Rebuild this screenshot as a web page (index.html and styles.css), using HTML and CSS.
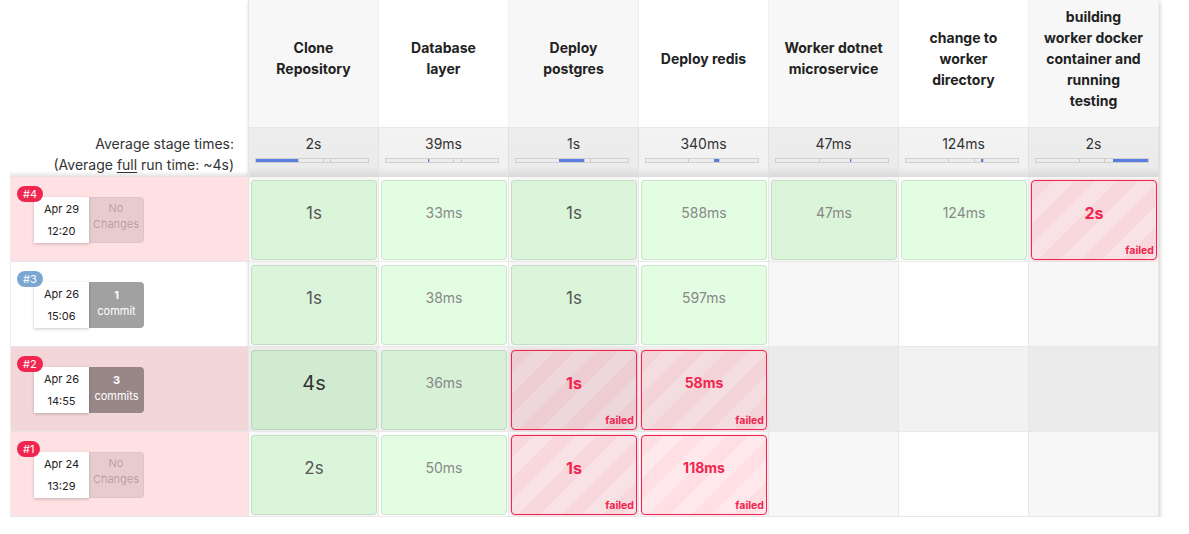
FILE: index.html
```html
<!DOCTYPE html>
<html>
<head>
<meta charset="utf-8">
<link rel="stylesheet" href="styles.css">
</head>
<body>
<div class="stage-view">
  <div class="builds">
    <div class="builds-head"></div>
    <div class="avg-label">
      <div>Average stage times:</div>
      <div>(Average <u>full</u> run time: ~4s)</div>
    </div>

    <div class="build failed">
      <span class="badge red">#4</span>
      <div class="card">
        <div class="date"><div>Apr 29</div><div>12:20</div></div>
        <div class="changes none"><div>No</div><div>Changes</div></div>
      </div>
    </div>

    <div class="build">
      <span class="badge blue">#3</span>
      <div class="card">
        <div class="date"><div>Apr 26</div><div>15:06</div></div>
        <div class="changes commits"><div class="num">1</div><div>commit</div></div>
      </div>
    </div>

    <div class="build hover">
      <span class="badge red">#2</span>
      <div class="card">
        <div class="date"><div>Apr 26</div><div>14:55</div></div>
        <div class="changes commits"><div class="num">3</div><div>commits</div></div>
      </div>
    </div>

    <div class="build failed">
      <span class="badge red">#1</span>
      <div class="card">
        <div class="date"><div>Apr 24</div><div>13:29</div></div>
        <div class="changes none"><div>No</div><div>Changes</div></div>
      </div>
    </div>
  </div>

  <div class="stages">
    <div class="head odd">Clone Repository</div>
    <div class="head">Database layer</div>
    <div class="head odd">Deploy postgres</div>
    <div class="head">Deploy redis</div>
    <div class="head odd">Worker dotnet microservice</div>
    <div class="head">change to worker directory</div>
    <div class="head odd">building worker docker container and running testing</div>

    <div class="avg odd"><div>2s</div>
      <div class="bar"><span class="seg blue" style="flex:43"></span><span class="seg" style="flex:25"></span><span class="seg" style="flex:7"></span><span class="seg" style="flex:39"></span></div></div>
    <div class="avg"><div>39ms</div>
      <div class="bar"><span class="seg" style="flex:43"></span><span class="seg blue" style="flex:1"></span><span class="seg" style="flex:24"></span><span class="seg" style="flex:8"></span><span class="seg" style="flex:38"></span></div></div>
    <div class="avg odd"><div>1s</div>
      <div class="bar"><span class="seg" style="flex:44"></span><span class="seg blue" style="flex:25"></span><span class="seg" style="flex:6"></span><span class="seg" style="flex:39"></span></div></div>
    <div class="avg"><div>340ms</div>
      <div class="bar"><span class="seg" style="flex:43"></span><span class="seg" style="flex:26"></span><span class="seg blue" style="flex:5"></span><span class="seg" style="flex:40"></span></div></div>
    <div class="avg odd"><div>47ms</div>
      <div class="bar"><span class="seg" style="flex:44"></span><span class="seg" style="flex:31"></span><span class="seg blue" style="flex:1"></span><span class="seg" style="flex:38"></span></div></div>
    <div class="avg"><div>124ms</div>
      <div class="bar"><span class="seg" style="flex:43"></span><span class="seg" style="flex:26"></span><span class="seg" style="flex:7"></span><span class="seg blue" style="flex:2"></span><span class="seg" style="flex:36"></span></div></div>
    <div class="avg odd"><div>2s</div>
      <div class="bar"><span class="seg" style="flex:44"></span><span class="seg" style="flex:25"></span><span class="seg" style="flex:9"></span><span class="seg blue" style="flex:36"></span></div></div>

    <!-- #4 -->
    <div class="cell odd"><div class="box ok"><span class="dur big">1s</span></div></div>
    <div class="cell"><div class="box ok"><span class="dur">33ms</span></div></div>
    <div class="cell odd"><div class="box ok"><span class="dur big">1s</span></div></div>
    <div class="cell"><div class="box ok"><span class="dur">588ms</span></div></div>
    <div class="cell odd"><div class="box ok"><span class="dur">47ms</span></div></div>
    <div class="cell"><div class="box ok"><span class="dur">124ms</span></div></div>
    <div class="cell odd"><div class="box fail"><span class="dur sec">2s</span><span class="fail-label">failed</span></div></div>

    <!-- #3 -->
    <div class="cell odd"><div class="box ok"><span class="dur big">1s</span></div></div>
    <div class="cell"><div class="box ok"><span class="dur">38ms</span></div></div>
    <div class="cell odd"><div class="box ok"><span class="dur big">1s</span></div></div>
    <div class="cell"><div class="box ok"><span class="dur">597ms</span></div></div>
    <div class="cell odd"></div>
    <div class="cell"></div>
    <div class="cell odd"></div>

    <!-- #2 -->
    <div class="cell hov odd"><div class="box ok"><span class="dur huge">4s</span></div></div>
    <div class="cell hov"><div class="box ok"><span class="dur">36ms</span></div></div>
    <div class="cell hov odd"><div class="box fail"><span class="dur sec">1s</span><span class="fail-label">failed</span></div></div>
    <div class="cell hov"><div class="box fail"><span class="dur">58ms</span><span class="fail-label">failed</span></div></div>
    <div class="cell hov odd"></div>
    <div class="cell hov"></div>
    <div class="cell hov odd"></div>

    <!-- #1 -->
    <div class="cell odd"><div class="box ok"><span class="dur big">2s</span></div></div>
    <div class="cell"><div class="box ok"><span class="dur">50ms</span></div></div>
    <div class="cell odd"><div class="box fail"><span class="dur sec">1s</span><span class="fail-label">failed</span></div></div>
    <div class="cell"><div class="box fail"><span class="dur">118ms</span><span class="fail-label">failed</span></div></div>
    <div class="cell odd"></div>
    <div class="cell"></div>
    <div class="cell odd"></div>
  </div>
</div>
</body>
</html>
```
FILE: styles.css
```css
html, body {
  margin: 0;
  background: #fff;
}
body {
  font-family: Inter, "Noto Sans", "Liberation Sans", sans-serif;
  color: #333;
}
.stage-view {
  display: flex;
  align-items: flex-start;
  padding-left: 10px;
}

/* left column */
.builds {
  width: 238px;
  display: flex;
  flex-direction: column;
}
.builds-head {
  height: 127px;
}
.avg-label {
  height: 50px;
  box-sizing: border-box;
  padding: 6px 14px 0 0;
  text-align: right;
  font-size: 14px;
  line-height: 21px;
  color: #333;
  background: linear-gradient(to bottom, #fff 88%, #e2e2e2 100%);
}
.avg-label u {
  text-underline-offset: 2px;
}
.build {
  position: relative;
  height: 85px;
  box-sizing: border-box;
  padding: 20px 0 0 23px;
  border-bottom: 1px solid #e6e6e6;
  border-left: 1px solid #ececec;
}
.build.failed { background: #ffe0e3; }
.build.hover { background: #f2d6d8; }
.badge {
  position: absolute;
  left: 6px;
  top: 9px;
  z-index: 1;
  height: 16px;
  line-height: 16px;
  padding: 0 6px;
  border-radius: 8px;
  font-size: 11px;
  color: #fff;
}
.badge.red { background: #f0264f; }
.badge.blue { background: #7ba6d2; }
.card {
  display: flex;
  height: 46px;
}
.date {
  width: 55px;
  box-sizing: border-box;
  padding-top: 1px;
  background: #fff;
  box-shadow: 0 1px 3px rgba(0, 0, 0, 0.22);
  text-align: center;
  font-size: 11px;
  line-height: 22px;
  color: #222;
}
.changes {
  width: 55px;
  box-sizing: border-box;
  border-radius: 0 4px 4px 0;
  text-align: center;
  font-size: 11px;
  line-height: 16px;
}
.changes.none {
  padding-top: 2px;
  background: rgba(0, 0, 0, 0.09);
  border: 1px solid rgba(0, 0, 0, 0.04);
  border-left: 0;
  color: rgba(0, 0, 0, 0.24);
}
.changes.commits {
  padding-top: 5px;
  background: rgba(0, 0, 0, 0.37);
  color: #fff;
}
.changes .num { font-weight: 700; }

/* stage table */
.stages {
  display: grid;
  grid-template-columns: repeat(7, 130px);
  grid-template-rows: 127px 50px repeat(4, 85px);
  border-left: 1px solid #e6e6e6;
  box-shadow: 1px 2px 4px rgba(0, 0, 0, 0.2);
}
.head {
  display: flex;
  align-items: center;
  justify-content: center;
  box-sizing: border-box;
  padding: 0 15px 11px;
  text-align: center;
  font-size: 14px;
  font-weight: 700;
  line-height: 21px;
  color: #222;
  background: #fff;
  border-right: 1px solid #efefef;
}
.head.odd { background: #f7f7f7; }

.avg {
  box-sizing: border-box;
  padding-top: 6px;
  text-align: center;
  font-size: 14px;
  line-height: 20px;
  color: #333;
  border-right: 1px solid #e0e0e0;
  border-top: 1px solid #e8e8e8;
  background: linear-gradient(to bottom, #f3f3f3 0%, #f1f1f1 80%, #dedede 100%);
}
.avg.odd {
  background: linear-gradient(to bottom, #ededed 0%, #ebebeb 80%, #d9d9d9 100%);
}
.bar {
  display: flex;
  width: 112px;
  height: 3px;
  margin: 4px 0 0 6px;
  border: 1px solid #d0d0d0;
  background: #ececec;
}
.seg {
  flex-basis: 0;
  min-width: 1px;
  background: #ececec;
  box-shadow: inset 1px 0 0 #c9c9c9;
}
.seg:first-child { box-shadow: none; }
.seg.blue {
  background: #5a7de0;
  box-shadow: none;
}

.cell {
  box-sizing: border-box;
  padding: 2px 1px 0 2px;
  background: #fff;
  border-right: 1px solid #e8e8e8;
  border-bottom: 1px solid #e8e8e8;
}
.cell.odd { background: #f7f7f7; }
.cell.hov { background: #f2f2f2; }
.cell.hov.odd { background: #ebebeb; }

.box {
  height: 80px;
  box-sizing: border-box;
  margin-top: 1px;
  padding-top: 22px;
  display: flex;
  flex-direction: column;
  align-items: center;
  border-radius: 4px;
  text-align: center;
}
.box.ok {
  background: rgba(0, 235, 0, 0.11);
  border: 1px solid rgba(0, 0, 0, 0.1);
}
.box.fail {
  border: 1px solid #f0264f;
  box-shadow: 0 0 2px rgba(240, 38, 79, 0.45);
  background: repeating-linear-gradient(135deg,
    rgba(255, 0, 45, 0.13) 0 15px,
    rgba(255, 0, 45, 0.085) 15px 30px);
}
.dur {
  font-size: 14px;
  line-height: 20px;
  color: #888;
}
.dur.big { font-size: 17px; color: #555; }
.dur.huge { font-size: 20px; color: #333; }
.box.fail .dur {
  font-weight: 700;
  color: #f0264f;
}
.box.fail .dur.sec { font-size: 16px; }
.fail-label {
  margin-top: auto;
  align-self: flex-end;
  padding: 0 2px 1px 0;
  font-size: 10.5px;
  line-height: 14px;
  font-weight: 700;
  color: #f0264f;
}
```
